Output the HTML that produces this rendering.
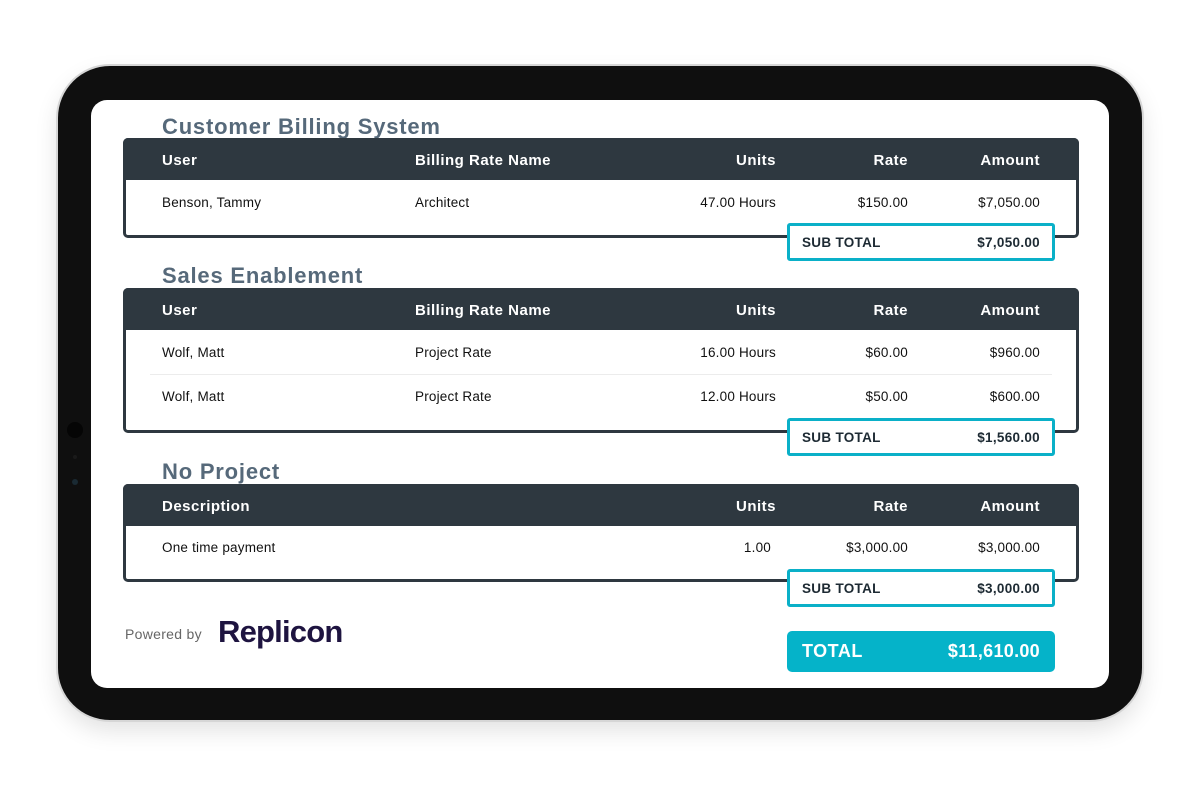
<!DOCTYPE html>
<html><head><style>
*{margin:0;padding:0;box-sizing:border-box}
body{width:1200px;height:785px;background:#fff;position:relative;overflow:hidden;font-family:"Liberation Sans",sans-serif}
.dev{position:absolute;left:58px;top:66px;width:1084px;height:654px;border-radius:52px;background:#0f0f0f;box-shadow:0 0 0 2px #d6d6d6,0 10px 24px rgba(0,0,0,.12)}
.scr{position:absolute;left:91px;top:100px;width:1018px;height:588px;border-radius:16px;background:#fff}
.a{position:absolute;white-space:nowrap}
.title{font-size:22px;font-weight:bold;color:#56697a;left:162px;letter-spacing:0.8px}
.tbl{position:absolute;left:123px;width:956px;border:3px solid #2e3840;border-radius:5px;background:#fff}
.hd{position:absolute;left:-3px;top:-3px;width:956px;height:42px;background:#2e3840;border-radius:5px 5px 0 0}
.h{font-size:15px;font-weight:bold;color:#fff;letter-spacing:0.5px}
.c{font-size:13.5px;color:#111;letter-spacing:0.2px}
.r{text-align:right}
.sub{position:absolute;left:787px;width:268px;height:38px;border:3px solid #0ab0c8;border-radius:3px;background:#fff}
.sub span{position:absolute;top:9px;font-size:13.5px;font-weight:bold;color:#1d2a33;letter-spacing:0.3px}
.dot{position:absolute;border-radius:50%;background:#1a1a1a}
</style></head><body>
<div class="dev"></div>
<div class="dot" style="left:67px;top:422px;width:16px;height:16px;background:#050505"></div>
<div class="dot" style="left:73px;top:455px;width:4px;height:4px"></div>
<div class="dot" style="left:72px;top:479px;width:6px;height:6px;background:#1a2a33"></div>
<div class="scr"></div>

<div class="a title" style="top:114px">Customer Billing System</div>
<div class="tbl" style="top:138px;height:100px"><div class="hd"></div></div>
<div class="a h" style="left:162px;top:152px">User</div>
<div class="a h" style="left:415px;top:152px">Billing Rate Name</div>
<div class="a h r" style="right:424px;top:152px">Units</div>
<div class="a h r" style="right:292px;top:152px">Rate</div>
<div class="a h r" style="right:160px;top:152px">Amount</div>
<div class="a c" style="left:162px;top:195px">Benson, Tammy</div>
<div class="a c" style="left:415px;top:195px">Architect</div>
<div class="a c r" style="right:424px;top:195px">47.00 Hours</div>
<div class="a c r" style="right:292px;top:195px">$150.00</div>
<div class="a c r" style="right:160px;top:195px">$7,050.00</div>
<div class="sub" style="top:223px"><span style="left:12px">SUB TOTAL</span><span style="right:12px">$7,050.00</span></div>

<div class="a title" style="top:263px">Sales Enablement</div>
<div class="tbl" style="top:288px;height:145px"><div class="hd"></div></div>
<div class="a h" style="left:162px;top:302px">User</div>
<div class="a h" style="left:415px;top:302px">Billing Rate Name</div>
<div class="a h r" style="right:424px;top:302px">Units</div>
<div class="a h r" style="right:292px;top:302px">Rate</div>
<div class="a h r" style="right:160px;top:302px">Amount</div>
<div class="a c" style="left:162px;top:345px">Wolf, Matt</div>
<div class="a c" style="left:415px;top:345px">Project Rate</div>
<div class="a c r" style="right:424px;top:345px">16.00 Hours</div>
<div class="a c r" style="right:292px;top:345px">$60.00</div>
<div class="a c r" style="right:160px;top:345px">$960.00</div>
<div class="a" style="left:150px;top:374px;width:902px;height:1px;background:#ececec"></div>
<div class="a c" style="left:162px;top:389px">Wolf, Matt</div>
<div class="a c" style="left:415px;top:389px">Project Rate</div>
<div class="a c r" style="right:424px;top:389px">12.00 Hours</div>
<div class="a c r" style="right:292px;top:389px">$50.00</div>
<div class="a c r" style="right:160px;top:389px">$600.00</div>
<div class="sub" style="top:418px"><span style="left:12px">SUB TOTAL</span><span style="right:12px">$1,560.00</span></div>

<div class="a title" style="top:459px">No Project</div>
<div class="tbl" style="top:484px;height:98px"><div class="hd"></div></div>
<div class="a h" style="left:162px;top:498px">Description</div>
<div class="a h r" style="right:424px;top:498px">Units</div>
<div class="a h r" style="right:292px;top:498px">Rate</div>
<div class="a h r" style="right:160px;top:498px">Amount</div>
<div class="a c" style="left:162px;top:540px">One time payment</div>
<div class="a c r" style="right:429px;top:540px">1.00</div>
<div class="a c r" style="right:292px;top:540px">$3,000.00</div>
<div class="a c r" style="right:160px;top:540px">$3,000.00</div>
<div class="sub" style="top:569px"><span style="left:12px">SUB TOTAL</span><span style="right:12px">$3,000.00</span></div>

<div class="a" style="left:125px;top:626px;font-size:14px;color:#666;letter-spacing:0.3px">Powered by</div>
<div class="a" style="left:218px;top:614px;font-size:31px;font-weight:bold;color:#1e1440;letter-spacing:-0.8px">Replicon</div>
<div class="a" style="left:787px;top:631px;width:268px;height:41px;border-radius:5px;background:#05b3c9"></div>
<div class="a" style="left:802px;top:641px;font-size:18px;font-weight:bold;color:#fff;letter-spacing:0.5px">TOTAL</div>
<div class="a r" style="right:160px;top:641px;font-size:18px;font-weight:bold;color:#fff;letter-spacing:0.3px">$11,610.00</div>
</body></html>
